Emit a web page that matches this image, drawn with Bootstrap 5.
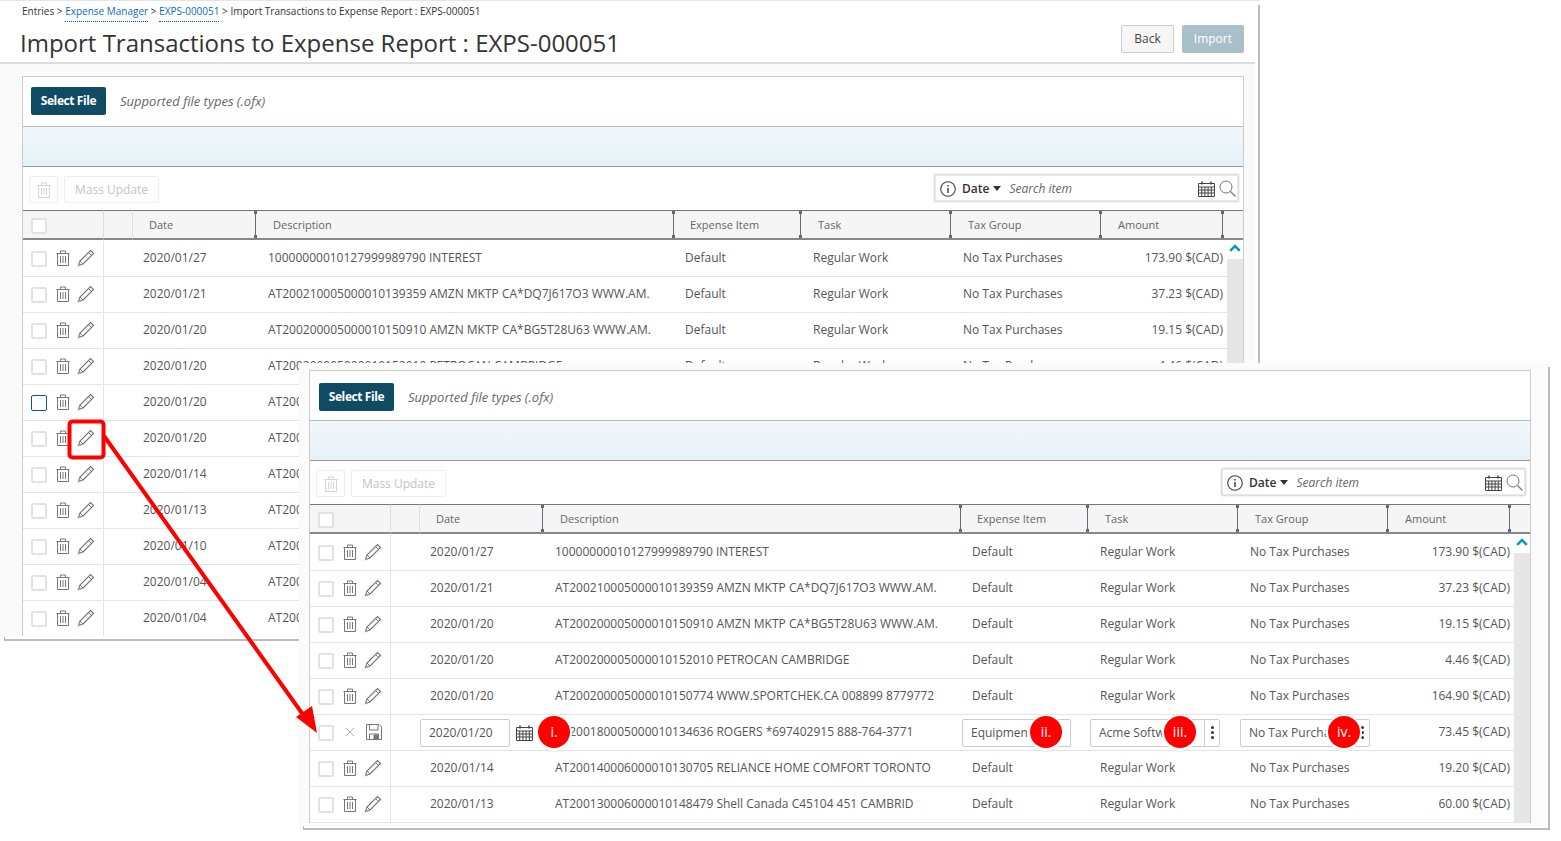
<!DOCTYPE html>
<html lang="en">
<head>
<meta charset="utf-8">
<title>Import Transactions to Expense Report</title>
<link href="https://cdn.jsdelivr.net/npm/bootstrap@5.3.0/dist/css/bootstrap.min.css" rel="stylesheet">
<style>
html,body{height:100%;overflow:hidden;background:#fff;}
body{font-family:"Open Sans","Liberation Sans",sans-serif;font-size:12px;color:#555;}
.desk{position:relative;width:1561px;height:841px;overflow:hidden;}
.win{position:absolute;background:#fff;}
.win::before{content:"";position:absolute;top:4px;bottom:0;right:0;width:2px;background:#bbb;}
.win::after{content:"";position:absolute;left:4px;right:0;bottom:0;height:4px;border-bottom:2px solid #bbb;border-left:1px solid #bbb;}
.win-back{left:0;top:0;width:1260px;height:641px;z-index:1;border-top:1px solid #e5e5e5;}
.win-front{left:299px;top:363px;width:1251px;height:467px;z-index:2;background:#fbfbfb;padding:7px 0 0 10px;}
.back-inner{width:1255px;height:636px;background:#fafafa;}
.pg-head{height:63px;background:#fff;border-bottom:2px solid #ddd;padding:0 11px 0 20px;}
.crumb{font-size:10px;color:#333;line-height:12px;padding:4px 0 0 2px;}
.crumb a{color:#0b6cc0;text-decoration:none;border-bottom:1px dotted #0b4fa8;padding-bottom:3px;}
.pg-title{font-size:24px;font-weight:400;color:#333;margin:9px 0 0;line-height:34px;}
.head-btns{margin-top:24px;}
.btn-b,.btn-i{font-size:12px;height:28px;padding:0 12px;border-radius:2px;line-height:26px;}
.btn-b{background:#f6f6f6;border:1px solid #ccc;color:#444;}
.btn-i{background:#a9c0ca;border:1px solid #a9c0ca;color:#fff;opacity:1;padding:0 11px;}
.back-body{padding:12px 0 0 22px;}
.wcard{width:1222px;border:1px solid #ccc;border-bottom:0;border-radius:0;background:#fff;overflow:hidden;}
.h-back{height:560px;}
.h-front{height:453px;}
.sel-row{height:50px;padding:10px 0 0 8px;border-bottom:1px solid #bbb;}
.h-front .sel-row{padding:12px 0 0 9px;}
.btn-sel{background:#0f4c64;border:0;color:#fff;font-weight:700;font-size:12px;height:28px;width:75px;padding:0;border-radius:2px;letter-spacing:-.4px;}
.sup{font-style:italic;color:#666;font-size:13px;margin:0 0 0 14px;line-height:28px;}
.band{height:40px;background:linear-gradient(#f1f8fb,#e5f1f8);border-bottom:1px solid #999;}
.tools{height:43px;padding:9px 4px 0 6px;}
.btn-t{height:27px;border:1px solid #eee;border-radius:2px;background:#fff;color:#c4c4c4;font-size:12px;padding:1px 0 0;display:flex;align-items:center;justify-content:center;}
.btn-t1{width:29px;margin-right:6px;}
.btn-t2{width:95px;}
.srch{width:305px;height:28px;margin-top:-2px;border:1px solid #ddd;box-shadow:inset 0 0 0 1px #e8e8e8,0 0 2px #ccc;border-radius:2px;padding:1px 2px 0 5px;background:#fff;}
.srch-d{font-weight:600;color:#333;margin:0 4px 0 6px;}
.caret-d{width:0;height:0;border-left:4.5px solid transparent;border-right:4.5px solid transparent;border-top:5px solid #333;}
.srch-p{font-style:italic;color:#666;font-size:12px;margin-left:8px;}
.ic{display:block;flex:none;fill:none;stroke:#777;stroke-width:1;}
.tbl-h,.tbl-b{table-layout:fixed;border-collapse:separate;border-spacing:0;}
.tbl-h.table{width:1220px;margin:0 0 1px;}
.tbl-b.table{width:1204px;margin:0;flex:none;}
.tbl-h.table>thead>tr>th{height:30px;padding:2px 0 0 18px;background:#f5f5f5;border-top:1px solid #777;border-bottom:2px solid #888;font-weight:400;color:#666;position:relative;font-size:11px;box-shadow:none;vertical-align:middle;}
.tbl-h.table>thead>tr>th.hc{padding-left:8px;border-right:1px solid #ddd;}
.tbl-h.table>thead>tr>th.hb{padding:0;border-right:1px solid #ddd;}
.tbl-h.table>thead>tr>th.hd{padding-left:16px;}
.tbl-h.table>thead>tr>th.he{padding-left:17px;}
.tbl-h.table>thead>tr>th.rz::after{content:"";position:absolute;right:-1px;top:0;bottom:0;width:1px;background:#6c6a80;z-index:1;}
.tbl-h.table>thead>tr>th.rz::before{content:"";position:absolute;right:-2px;top:0;bottom:0;width:3px;background:radial-gradient(circle at 1.5px 1.5px,#666 1.5px,transparent 1.6px),radial-gradient(circle at 1.5px calc(100% - 1.5px),#666 1.5px,transparent 1.6px);z-index:1;}
.tbl-h.table>thead>tr>th.hl{padding:0;}
.cw81{width:81px}.cw29{width:29px}.cw122{width:122px}.cw418{width:418px}.cw127{width:127px}.cw150{width:150px}.cw21{width:21px}
.cw154{width:154px}.cw417{width:417px}.cw128{width:128px}.cw124{width:124px}
.tbl-b.table>tbody>tr>td{height:36px;padding:0 0 2px 10px;border-bottom:1px solid #e4e4e4;color:#555;white-space:nowrap;overflow:hidden;vertical-align:middle;background:#fff;box-shadow:none;font-size:12px;line-height:16px;}
.tbl-b.table>tbody>tr>td.ac{padding:0 0 2px 8px;border-right:1px solid #e4e4e4;overflow:visible;}
.tbl-b.table>tbody>tr>td.dt{padding-left:39px;}
.tbl-b.table>tbody>tr>td.am{padding:0 4px 2px 0;text-align:right;}
.tbl-b.table>tbody>tr>td.ed0{padding:0;}
.tbl-b.table>tbody>tr>td.edd{padding:0 0 0 29px;}
.chk.form-check-input{width:16px;height:16px;margin:3px 0 0;border:2px solid #e2e2e2;border-radius:2px;background-color:#fff;flex:none;}
.chk-h.form-check-input{margin-top:1px;}
.chk-f.form-check-input{border:1.5px solid #0b57a0;}
.g1{margin-left:8px;}
.g2{margin-left:6px;}
.g3{margin-left:11px;}
.g4{margin-left:11px;}
.g5{margin-left:6px;}
.sb{width:16px;flex:none;background:#e6e6e6;}
.sb-top{height:18px;background:#fff;display:flex;justify-content:center;padding-top:3px;}
.fld.form-control{height:28px;font-size:12px;color:#555;padding:0 8px;border:1px solid #ccc;border-radius:2px;box-shadow:none;}
.fw90{width:90px;flex:none;}
.fw109{width:109px;}
.gw130{width:130px;flex-wrap:nowrap;}
.btn-d{width:16px;height:28px;padding:0;border:1px solid #ccc;border-left:1px solid #ccc;background:#fff;border-radius:0 2px 2px 0;display:flex;flex-direction:column;align-items:center;justify-content:center;gap:2px;}
.btn-d span{display:block;width:3px;height:3px;border-radius:50%;background:#333;}
.gw130 .fld.form-control{border-radius:2px 0 0 2px;min-width:0;}
.pin{position:absolute;width:32px;height:32px;top:353px;border-radius:50%;background:#f00;color:#fff;font-size:14px;line-height:32px;text-align:center;box-shadow:0 1px 0 2px #fff,0 3px 2px #bbb;z-index:3;}
.p1{left:239px}.p2{left:731px}.p3{left:865px}.p4{left:1029px}
.ov{position:absolute;left:0;top:0;z-index:5;pointer-events:none;}
.spr{position:absolute;width:0;height:0;}
</style>
</head>
<body>
<svg class="spr" aria-hidden="true">
<symbol id="i-trash" viewBox="0 0 16 16"><path d="M1.5 3.500h13M5.500 3.500V1h5v2.500M2.500 3.500V15.500H13.500V3.500M5.500 6v7M8 6v7M10.500 6v7"/></symbol>
<symbol id="i-pen" viewBox="0 0 18 18"><path d="M13.500 1.500 16.500 4.500 6 15 1.500 16.500 3 12Z" stroke="#777" stroke-width="1.200"/><path d="M11.500 3.500 14.500 6.500M3 12 6 15" stroke="#777"/><path d="M1.500 16.500 2.300 14.200 3.800 15.700Z" fill="#c49a6c" stroke="#c49a6c"/></symbol>
<symbol id="i-cal" viewBox="0 0 17 16"><path d="M.5 2.500h16V15.500H.5ZM.5 6h16M.5 9h16M.5 12h16M3.700 6v9.500M6.900 6v9.500M10.100 6v9.500M13.300 6v9.500" stroke="#444"/><path d="M4 .5v3M13 .5v3" stroke="#444" stroke-width="1.500"/></symbol>
<symbol id="i-srch" viewBox="0 0 17 17"><circle cx="7" cy="7" r="6"/><path d="M11.500 11.500 16.500 16.500" stroke-width="1.300"/></symbol>
<symbol id="i-info" viewBox="0 0 16 16"><circle cx="8" cy="8" r="7.300" stroke="#444" stroke-width="1.100"/><path d="M8 7v5" stroke="#444" stroke-width="1.500"/><path d="M8 4v1.600" stroke="#444" stroke-width="1.600"/></symbol>
<symbol id="i-save" viewBox="0 0 16 16"><path d="M.5.5H13L15.500 3V15.500H.5Z"/><path d="M3.500.5V6H12V.5M3.500 15.500V10H12.500V15.500"/><path d="M8 11h4v4.500H8Z" fill="#777"/></symbol>
<symbol id="i-x" viewBox="0 0 10 10"><path d="M1 1 9 9M9 1 1 9" stroke="#aaa"/></symbol>
<symbol id="i-up" viewBox="0 0 12 8"><path d="M1.200 6.800 6 2 10.800 6.800" stroke="#0a9ac0" stroke-width="2.600"/></symbol>
</svg>

<div class="desk">

<!-- Back window -->
<div class="win win-back">
 <div class="back-inner">
  <div class="pg-head d-flex justify-content-between">
   <div>
    <div class="crumb">Entries &gt; <a href="#">Expense Manager</a> &gt; <a href="#">EXPS-000051</a> &gt; Import Transactions to Expense Report : EXPS-000051</div>
    <h1 class="pg-title">Import Transactions to Expense Report : EXPS-000051</h1>
   </div>
   <div class="head-btns d-flex gap-2">
    <button class="btn btn-b" type="button">Back</button>
    <button class="btn btn-i" type="button">Import</button>
   </div>
  </div>
  <div class="back-body">
   <div class="wcard h-back">
    <div class="sel-row d-flex"><button class="btn btn-sel" type="button">Select File</button><p class="sup">Supported file types (.ofx)</p></div>
    <div class="band"></div>
    <div class="tools d-flex justify-content-between">
     <div class="d-flex"><button class="btn-t btn-t1" type="button"><svg class="ic" width="16" height="16" style="stroke:#d4d4d4"><use href="#i-trash"/></svg></button><button class="btn-t btn-t2" type="button">Mass Update</button></div>
     <div class="srch d-flex align-items-center"><svg class="ic" width="16" height="16"><use href="#i-info"/></svg><span class="srch-d">Date</span><span class="caret-d"></span><span class="srch-p">Search item</span><svg class="ic ms-auto" width="17" height="16"><use href="#i-cal"/></svg><svg class="ic ms-1" width="17" height="17"><use href="#i-srch"/></svg></div>
    </div>
    <table class="table tbl-h">
     <colgroup><col class="cw81"><col class="cw29"><col class="cw122"><col class="cw418"><col class="cw127"><col class="cw150"><col class="cw150"><col class="cw122"><col class="cw21"></colgroup>
     <thead><tr><th class="hc"><input class="form-check-input chk chk-h" type="checkbox" aria-label="All"></th><th class="hb"></th><th class="rz hd">Date</th><th class="rz">Description</th><th class="rz he">Expense Item</th><th class="rz">Task</th><th class="rz">Tax Group</th><th class="rz">Amount</th><th class="hl"></th></tr></thead>
    </table>
    <div class="d-flex">
     <table class="table tbl-b">
      <colgroup><col class="cw81"><col class="cw154"><col class="cw417"><col class="cw128"><col class="cw150"><col class="cw150"><col class="cw124"></colgroup>
      <tbody>
       <tr><td class="ac"><div class="d-flex align-items-center"><input class="form-check-input chk" type="checkbox" aria-label="Row"><svg class="ic g1" width="16" height="16"><use href="#i-trash"/></svg><svg class="ic g2" width="18" height="18"><use href="#i-pen"/></svg></div></td><td class="dt">2020/01/27</td><td>10000000010127999989790 INTEREST</td><td>Default</td><td>Regular Work</td><td>No Tax Purchases</td><td class="am">173.90 $(CAD)</td></tr>
       <tr><td class="ac"><div class="d-flex align-items-center"><input class="form-check-input chk" type="checkbox" aria-label="Row"><svg class="ic g1" width="16" height="16"><use href="#i-trash"/></svg><svg class="ic g2" width="18" height="18"><use href="#i-pen"/></svg></div></td><td class="dt">2020/01/21</td><td>AT200210005000010139359 AMZN MKTP CA*DQ7J617O3 WWW.AM.</td><td>Default</td><td>Regular Work</td><td>No Tax Purchases</td><td class="am">37.23 $(CAD)</td></tr>
       <tr><td class="ac"><div class="d-flex align-items-center"><input class="form-check-input chk" type="checkbox" aria-label="Row"><svg class="ic g1" width="16" height="16"><use href="#i-trash"/></svg><svg class="ic g2" width="18" height="18"><use href="#i-pen"/></svg></div></td><td class="dt">2020/01/20</td><td>AT200200005000010150910 AMZN MKTP CA*BG5T28U63 WWW.AM.</td><td>Default</td><td>Regular Work</td><td>No Tax Purchases</td><td class="am">19.15 $(CAD)</td></tr>
       <tr><td class="ac"><div class="d-flex align-items-center"><input class="form-check-input chk" type="checkbox" aria-label="Row"><svg class="ic g1" width="16" height="16"><use href="#i-trash"/></svg><svg class="ic g2" width="18" height="18"><use href="#i-pen"/></svg></div></td><td class="dt">2020/01/20</td><td>AT200200005000010152010 PETROCAN CAMBRIDGE</td><td>Default</td><td>Regular Work</td><td>No Tax Purchases</td><td class="am">4.46 $(CAD)</td></tr>
       <tr><td class="ac"><div class="d-flex align-items-center"><input class="form-check-input chk chk-f" type="checkbox" aria-label="Row"><svg class="ic g1" width="16" height="16"><use href="#i-trash"/></svg><svg class="ic g2" width="18" height="18"><use href="#i-pen"/></svg></div></td><td class="dt">2020/01/20</td><td>AT200</td><td></td><td></td><td></td><td class="am"></td></tr>
       <tr><td class="ac"><div class="d-flex align-items-center"><input class="form-check-input chk" type="checkbox" aria-label="Row"><svg class="ic g1" width="16" height="16"><use href="#i-trash"/></svg><svg class="ic g2" width="18" height="18"><use href="#i-pen"/></svg></div></td><td class="dt">2020/01/20</td><td>AT200</td><td></td><td></td><td></td><td class="am"></td></tr>
       <tr><td class="ac"><div class="d-flex align-items-center"><input class="form-check-input chk" type="checkbox" aria-label="Row"><svg class="ic g1" width="16" height="16"><use href="#i-trash"/></svg><svg class="ic g2" width="18" height="18"><use href="#i-pen"/></svg></div></td><td class="dt">2020/01/14</td><td>AT200</td><td></td><td></td><td></td><td class="am"></td></tr>
       <tr><td class="ac"><div class="d-flex align-items-center"><input class="form-check-input chk" type="checkbox" aria-label="Row"><svg class="ic g1" width="16" height="16"><use href="#i-trash"/></svg><svg class="ic g2" width="18" height="18"><use href="#i-pen"/></svg></div></td><td class="dt">2020/01/13</td><td>AT200</td><td></td><td></td><td></td><td class="am"></td></tr>
       <tr><td class="ac"><div class="d-flex align-items-center"><input class="form-check-input chk" type="checkbox" aria-label="Row"><svg class="ic g1" width="16" height="16"><use href="#i-trash"/></svg><svg class="ic g2" width="18" height="18"><use href="#i-pen"/></svg></div></td><td class="dt">2020/01/10</td><td>AT200</td><td></td><td></td><td></td><td class="am"></td></tr>
       <tr><td class="ac"><div class="d-flex align-items-center"><input class="form-check-input chk" type="checkbox" aria-label="Row"><svg class="ic g1" width="16" height="16"><use href="#i-trash"/></svg><svg class="ic g2" width="18" height="18"><use href="#i-pen"/></svg></div></td><td class="dt">2020/01/04</td><td>AT200</td><td></td><td></td><td></td><td class="am"></td></tr>
       <tr><td class="ac"><div class="d-flex align-items-center"><input class="form-check-input chk" type="checkbox" aria-label="Row"><svg class="ic g1" width="16" height="16"><use href="#i-trash"/></svg><svg class="ic g2" width="18" height="18"><use href="#i-pen"/></svg></div></td><td class="dt">2020/01/04</td><td>AT200</td><td></td><td></td><td></td><td class="am"></td></tr>
      </tbody>
     </table>
     <div class="sb"><div class="sb-top"><svg class="ic" width="12" height="8"><use href="#i-up"/></svg></div></div>
    </div>
   </div>
  </div>
 </div>
</div>

<!-- Front window -->
<div class="win win-front">
 <div class="wcard h-front">
  <div class="sel-row d-flex"><button class="btn btn-sel" type="button">Select File</button><p class="sup">Supported file types (.ofx)</p></div>
  <div class="band"></div>
  <div class="tools d-flex justify-content-between">
   <div class="d-flex"><button class="btn-t btn-t1" type="button"><svg class="ic" width="16" height="16" style="stroke:#d4d4d4"><use href="#i-trash"/></svg></button><button class="btn-t btn-t2" type="button">Mass Update</button></div>
   <div class="srch d-flex align-items-center"><svg class="ic" width="16" height="16"><use href="#i-info"/></svg><span class="srch-d">Date</span><span class="caret-d"></span><span class="srch-p">Search item</span><svg class="ic ms-auto" width="17" height="16"><use href="#i-cal"/></svg><svg class="ic ms-1" width="17" height="17"><use href="#i-srch"/></svg></div>
  </div>
  <table class="table tbl-h">
   <colgroup><col class="cw81"><col class="cw29"><col class="cw122"><col class="cw418"><col class="cw127"><col class="cw150"><col class="cw150"><col class="cw122"><col class="cw21"></colgroup>
   <thead><tr><th class="hc"><input class="form-check-input chk chk-h" type="checkbox" aria-label="All"></th><th class="hb"></th><th class="rz hd">Date</th><th class="rz">Description</th><th class="rz he">Expense Item</th><th class="rz">Task</th><th class="rz">Tax Group</th><th class="rz">Amount</th><th class="hl"></th></tr></thead>
  </table>
  <div class="d-flex">
   <table class="table tbl-b">
    <colgroup><col class="cw81"><col class="cw154"><col class="cw417"><col class="cw128"><col class="cw150"><col class="cw150"><col class="cw124"></colgroup>
    <tbody>
     <tr><td class="ac"><div class="d-flex align-items-center"><input class="form-check-input chk" type="checkbox" aria-label="Row"><svg class="ic g1" width="16" height="16"><use href="#i-trash"/></svg><svg class="ic g2" width="18" height="18"><use href="#i-pen"/></svg></div></td><td class="dt">2020/01/27</td><td>10000000010127999989790 INTEREST</td><td>Default</td><td>Regular Work</td><td>No Tax Purchases</td><td class="am">173.90 $(CAD)</td></tr>
     <tr><td class="ac"><div class="d-flex align-items-center"><input class="form-check-input chk" type="checkbox" aria-label="Row"><svg class="ic g1" width="16" height="16"><use href="#i-trash"/></svg><svg class="ic g2" width="18" height="18"><use href="#i-pen"/></svg></div></td><td class="dt">2020/01/21</td><td>AT200210005000010139359 AMZN MKTP CA*DQ7J617O3 WWW.AM.</td><td>Default</td><td>Regular Work</td><td>No Tax Purchases</td><td class="am">37.23 $(CAD)</td></tr>
     <tr><td class="ac"><div class="d-flex align-items-center"><input class="form-check-input chk" type="checkbox" aria-label="Row"><svg class="ic g1" width="16" height="16"><use href="#i-trash"/></svg><svg class="ic g2" width="18" height="18"><use href="#i-pen"/></svg></div></td><td class="dt">2020/01/20</td><td>AT200200005000010150910 AMZN MKTP CA*BG5T28U63 WWW.AM.</td><td>Default</td><td>Regular Work</td><td>No Tax Purchases</td><td class="am">19.15 $(CAD)</td></tr>
     <tr><td class="ac"><div class="d-flex align-items-center"><input class="form-check-input chk" type="checkbox" aria-label="Row"><svg class="ic g1" width="16" height="16"><use href="#i-trash"/></svg><svg class="ic g2" width="18" height="18"><use href="#i-pen"/></svg></div></td><td class="dt">2020/01/20</td><td>AT200200005000010152010 PETROCAN CAMBRIDGE</td><td>Default</td><td>Regular Work</td><td>No Tax Purchases</td><td class="am">4.46 $(CAD)</td></tr>
     <tr><td class="ac"><div class="d-flex align-items-center"><input class="form-check-input chk" type="checkbox" aria-label="Row"><svg class="ic g1" width="16" height="16"><use href="#i-trash"/></svg><svg class="ic g2" width="18" height="18"><use href="#i-pen"/></svg></div></td><td class="dt">2020/01/20</td><td>AT200200005000010150774 WWW.SPORTCHEK.CA 008899 8779772</td><td>Default</td><td>Regular Work</td><td>No Tax Purchases</td><td class="am">164.90 $(CAD)</td></tr>
     <tr><td class="ac"><div class="d-flex align-items-center"><input class="form-check-input chk" type="checkbox" aria-label="Row"><svg class="ic g3" width="10" height="10"><use href="#i-x"/></svg><svg class="ic g4" width="16" height="16"><use href="#i-save"/></svg></div></td><td class="edd"><div class="d-flex align-items-center"><input class="form-control fld fw90" type="text" value="2020/01/20" aria-label="Date"><svg class="ic g5" width="17" height="16"><use href="#i-cal"/></svg></div></td><td>AT200180005000010134636 ROGERS *697402915 888-764-3771</td><td class="ed0"><input class="form-control fld fw109" type="text" value="Equipment" aria-label="Expense item"></td><td class="ed0"><div class="input-group gw130"><input class="form-control fld" type="text" value="Acme Software" aria-label="Task"><button class="btn-d" type="button" aria-label="More"><span></span><span></span><span></span></button></div></td><td class="ed0"><div class="input-group gw130"><input class="form-control fld" type="text" value="No Tax Purchases" aria-label="Tax group"><button class="btn-d" type="button" aria-label="More"><span></span><span></span><span></span></button></div></td><td class="am">73.45 $(CAD)</td></tr>
     <tr><td class="ac"><div class="d-flex align-items-center"><input class="form-check-input chk" type="checkbox" aria-label="Row"><svg class="ic g1" width="16" height="16"><use href="#i-trash"/></svg><svg class="ic g2" width="18" height="18"><use href="#i-pen"/></svg></div></td><td class="dt">2020/01/14</td><td>AT200140006000010130705 RELIANCE HOME COMFORT TORONTO</td><td>Default</td><td>Regular Work</td><td>No Tax Purchases</td><td class="am">19.20 $(CAD)</td></tr>
     <tr><td class="ac"><div class="d-flex align-items-center"><input class="form-check-input chk" type="checkbox" aria-label="Row"><svg class="ic g1" width="16" height="16"><use href="#i-trash"/></svg><svg class="ic g2" width="18" height="18"><use href="#i-pen"/></svg></div></td><td class="dt">2020/01/13</td><td>AT200130006000010148479 Shell Canada C45104 451 CAMBRID</td><td>Default</td><td>Regular Work</td><td>No Tax Purchases</td><td class="am">60.00 $(CAD)</td></tr>
    </tbody>
   </table>
   <div class="sb"><div class="sb-top"><svg class="ic" width="12" height="8"><use href="#i-up"/></svg></div></div>
  </div>
 </div>
 <span class="pin p1">i.</span>
 <span class="pin p2">ii.</span>
 <span class="pin p3">iii.</span>
 <span class="pin p4">iv.</span>
</div>

<svg class="ov" width="1561" height="841" fill="none" aria-hidden="true">
 <rect x="69.500" y="421.500" width="34" height="36" rx="3" stroke="#f00" stroke-width="4"/>
 <path d="M104 436 304 716" stroke="#f00" stroke-width="4"/>
 <path d="M317 733 296 717 312 706Z" fill="#f00"/>
</svg>
</div>
<script src="https://cdn.jsdelivr.net/npm/bootstrap@5.3.0/dist/js/bootstrap.bundle.min.js"></script>
</body>
</html>
